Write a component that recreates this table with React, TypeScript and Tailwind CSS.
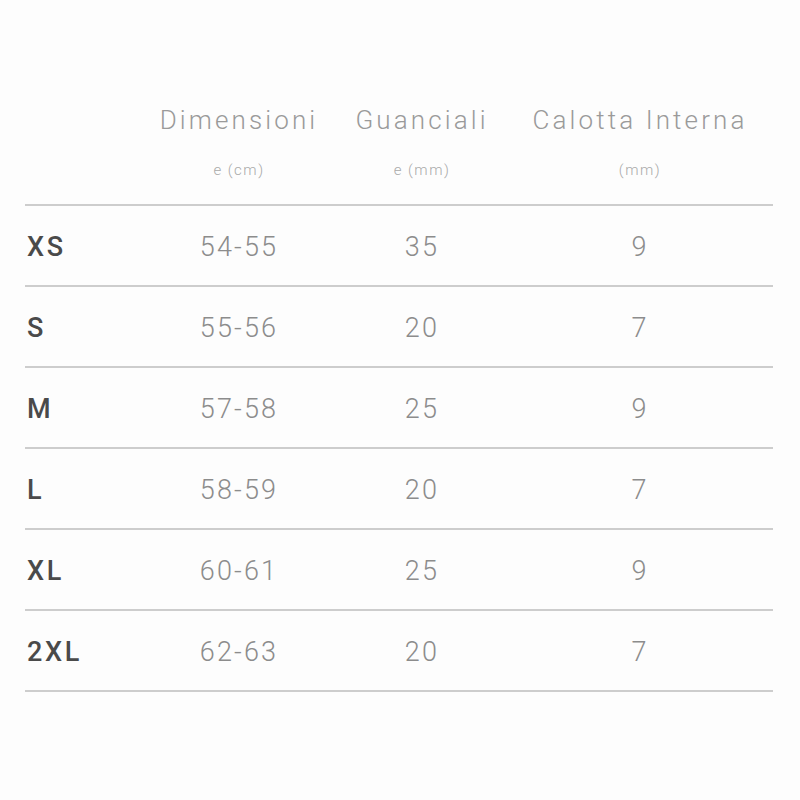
const rows = [
  { size: "XS", dim: "54-55", guan: "35", cal: "9" },
  { size: "S", dim: "55-56", guan: "20", cal: "7" },
  { size: "M", dim: "57-58", guan: "25", cal: "9" },
  { size: "L", dim: "58-59", guan: "20", cal: "7" },
  { size: "XL", dim: "60-61", guan: "25", cal: "9" },
  { size: "2XL", dim: "62-63", guan: "20", cal: "7" },
];

const cols = "grid grid-cols-[135px_158px_208px_228px]";

export default function App() {
  return (
    <div className="w-[800px] h-[800px] bg-[#fdfdfd] font-['Roboto',sans-serif] pt-[100px] pl-[25px]">
      <div className="w-[748px]">
        {/* Header */}
        <div className={`${cols} h-[106px] border-b-2 border-[#cdcdcd]`}>
          <div />
          <div className="flex flex-col items-center">
            <span className="text-[26px] font-light tracking-[0.12em] text-[#9a9a9a] leading-[40px]">Dimensioni</span>
            <span className="text-[15px] font-light tracking-[0.1em] text-[#aaaaaa] mt-[19px]">e (cm)</span>
          </div>
          <div className="flex flex-col items-center">
            <span className="text-[26px] font-light tracking-[0.12em] text-[#9a9a9a] leading-[40px]">Guanciali</span>
            <span className="text-[15px] font-light tracking-[0.1em] text-[#aaaaaa] mt-[19px]">e (mm)</span>
          </div>
          <div className="flex flex-col items-center">
            <span className="text-[26px] font-light tracking-[0.12em] text-[#9a9a9a] leading-[40px]">Calotta Interna</span>
            <span className="text-[15px] font-light tracking-[0.1em] text-[#aaaaaa] mt-[19px]">(mm)</span>
          </div>
        </div>

        {/* Rows */}
        {rows.map((r) => (
          <div key={r.size} className={`${cols} h-[81px] items-center border-b-2 border-[#cdcdcd] pt-[3px]`}>
            <span className="pl-[2px] text-[27px] font-medium tracking-[0.1em] text-[#4a4a4a]">{r.size}</span>
            <span className="text-center text-[27px] font-light tracking-[0.08em] text-[#8c8c8c]">{r.dim}</span>
            <span className="text-center text-[27px] font-light tracking-[0.08em] text-[#8c8c8c]">{r.guan}</span>
            <span className="text-center text-[27px] font-light tracking-[0.08em] text-[#8c8c8c]">{r.cal}</span>
          </div>
        ))}
      </div>
    </div>
  );
}
